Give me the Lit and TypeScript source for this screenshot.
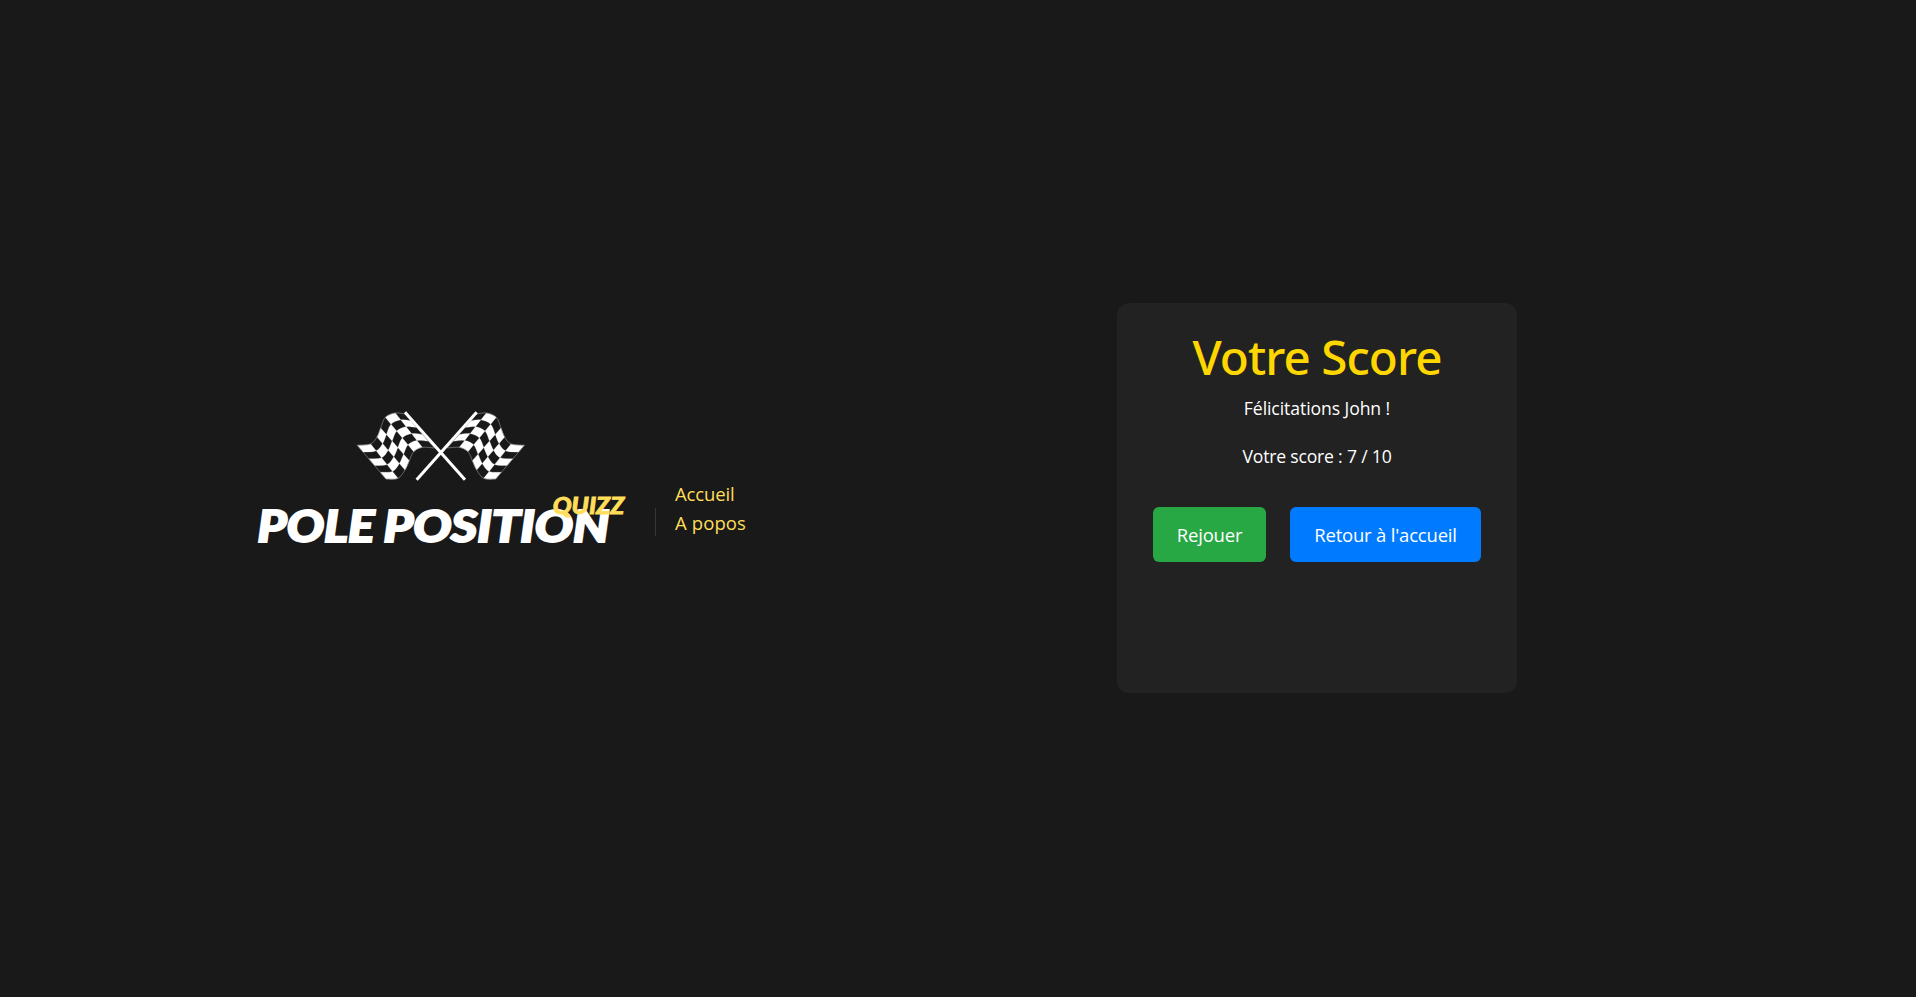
import { LitElement, html, svg, css } from "lit";
import { customElement, property } from "lit/decorators.js";

type Pt = [number, number];

// Edges of the right-hand flag, one node per column boundary (hoist to fly).
const TOP: Pt[] = [[410, 42], [439, 39], [469, 52], [483, 84], [494, 111], [513, 132], [553, 136]];
const BOTTOM: Pt[] = [[322, 144], [358, 142], [384, 155], [397, 182], [410, 210], [431, 235], [467, 237]];
const ROWS = 5;

function along(edge: Pt[], u: number): Pt {
  const i = Math.min(Math.floor(u), edge.length - 2);
  const t = u - i;
  const p0 = edge[Math.max(i - 1, 0)];
  const p1 = edge[i];
  const p2 = edge[i + 1];
  const p3 = edge[Math.min(i + 2, edge.length - 1)];
  const f = (k: 0 | 1) =>
    0.5 * (2 * p1[k] + (p2[k] - p0[k]) * t + (2 * p0[k] - 5 * p1[k] + 4 * p2[k] - p3[k]) * t * t +
      (3 * p1[k] - p0[k] - 3 * p2[k] + p3[k]) * t * t * t);
  return [f(0), f(1)];
}

function surface(u: number, v: number): string {
  const a = along(TOP, u);
  const b = along(BOTTOM, u);
  const w = v / ROWS;
  return `${(a[0] + (b[0] - a[0]) * w).toFixed(1)} ${(a[1] + (b[1] - a[1]) * w).toFixed(1)}`;
}

const STEPS = [0, 0.25, 0.5, 0.75, 1];

function checks(): string {
  let d = "";
  for (let c = 0; c < 6; c++) {
    for (let r = 0; r < ROWS; r++) {
      if ((c + r) % 2 === 0) continue;
      const pts = [
        ...STEPS.map((s) => surface(c + s, r)),
        ...[...STEPS].reverse().map((s) => surface(c + s, r + 1)),
      ];
      d += `M${pts.join("L")}Z`;
    }
  }
  return d;
}

function outline(): string {
  const us = Array.from({ length: 25 }, (_, i) => i / 4);
  return `M${[...us.map((u) => surface(u, 0)), ...us.reverse().map((u) => surface(u, ROWS))].join("L")}Z`;
}

@customElement("quiz-logo")
class QuizLogo extends LitElement {
  static styles = css`
    :host { display: block; }
    .logo { display: block; width: 380px; height: 197px; }
    .check { fill: #fff; stroke: #fff; stroke-width: 0.8; }
    .edge { fill: none; stroke: #8c8c8c; stroke-width: 2; }
    .pole { stroke: #fff; stroke-width: 9; fill: none; }
    .name, .tag { font-family: Lato, "Open Sans", sans-serif; font-weight: 900; font-style: italic; }
    .name { font-size: 43px; fill: #fff; stroke: #fff; stroke-width: 2; }
    .tag { font-size: 23px; fill: #ffde59; stroke: #ffde59; stroke-width: 0.8; }
  `;
  render() {
    const flag = svg`
      <path class="check" d=${checks()}></path>
      <path class="edge" d=${outline()}></path>
      <path class="pole" d="M410 37L230 239"></path>`;
    return html`
      <svg class="logo" viewBox="250 400 380 197" role="img" aria-label="Pole Position Quizz">
        <g transform="translate(340 400) scale(0.33333)">
          ${flag}
          <g transform="translate(605 0) scale(-1 1)">${flag}</g>
        </g>
        <text class="name" x="257.6" y="542.4" textLength="117" lengthAdjust="spacingAndGlyphs">POLE</text>
        <text class="name" x="383.4" y="542.4" textLength="226" lengthAdjust="spacingAndGlyphs">POSITION</text>
        <text class="tag" x="552.7" y="513.5" textLength="71.5" lengthAdjust="spacingAndGlyphs">QUIZZ</text>
      </svg>`;
  }
}

@customElement("score-card")
class ScoreCard extends LitElement {
  @property() player = "John";
  @property({ type: Number }) score = 7;
  @property({ type: Number }) total = 10;
  static styles = css`
    :host { display: block; }
    .card {
      box-sizing: border-box; width: 400px; height: 390px; padding: 26px 36px 0;
      border-radius: 12px; background: #222; color: #fff; text-align: center; white-space: nowrap;
    }
    .title {
      margin: 0; height: 58px; line-height: 56px; font-family: "Segoe UI", "Noto Sans", sans-serif;
      font-size: 47.5px; font-weight: 500; color: #ffd700; letter-spacing: -0.9px;
    }
    .line { margin: 8px 0 21px; height: 27px; line-height: 27px; font-size: 17.6px; letter-spacing: -0.08px; }
    .result { letter-spacing: -0.2px; }
    .actions { display: flex; gap: 24px; margin-top: 37px; }
    .btn {
      height: 55px; padding: 0; border: 0; border-radius: 6px; color: #fff;
      font: inherit; font-size: 18.5px; line-height: 55px; letter-spacing: -0.2px;
    }
    .replay { width: 113px; background: #28a745; }
    .home { width: 191px; background: #007bff; }
  `;
  render() {
    return html`
      <section class="card">
        <h1 class="title">Votre Score</h1>
        <p class="line">Félicitations ${this.player} !</p>
        <p class="line result">Votre score : ${this.score} / ${this.total}</p>
        <div class="actions">
          <button class="btn replay">Rejouer</button>
          <button class="btn home">Retour à l'accueil</button>
        </div>
      </section>`;
  }
}

@customElement("app-root")
class AppRoot extends LitElement {
  static styles = css`
    :host {
      display: block; height: 100vh; overflow: hidden; background: #191919;
      font-family: "Segoe UI", "Open Sans", "Noto Sans", sans-serif;
    }
    .page {
      box-sizing: border-box; height: 100%; display: flex; align-items: center;
      padding: 0 399px 1px 250px;
    }
    .side { display: flex; align-items: center; flex: 1; }
    .nav { display: flex; align-items: flex-end; padding-top: 20px; margin-left: 25px; }
    .rule { width: 1px; height: 28px; background: #363636; margin-bottom: 1px; }
    .links { display: flex; flex-direction: column; margin-left: 19px; }
    .link { height: 29px; line-height: 29px; font-size: 18.5px; color: #ffde59; text-decoration: none; white-space: nowrap; }
    .link:first-child { letter-spacing: -0.12px; }
    .link:last-child { letter-spacing: 0.12px; }
  `;
  render() {
    return html`
      <main class="page">
        <div class="side">
          <quiz-logo></quiz-logo>
          <nav class="nav">
            <div class="rule"></div>
            <div class="links">
              <a class="link">Accueil</a>
              <a class="link">A popos</a>
            </div>
          </nav>
        </div>
        <score-card></score-card>
      </main>`;
  }
}
